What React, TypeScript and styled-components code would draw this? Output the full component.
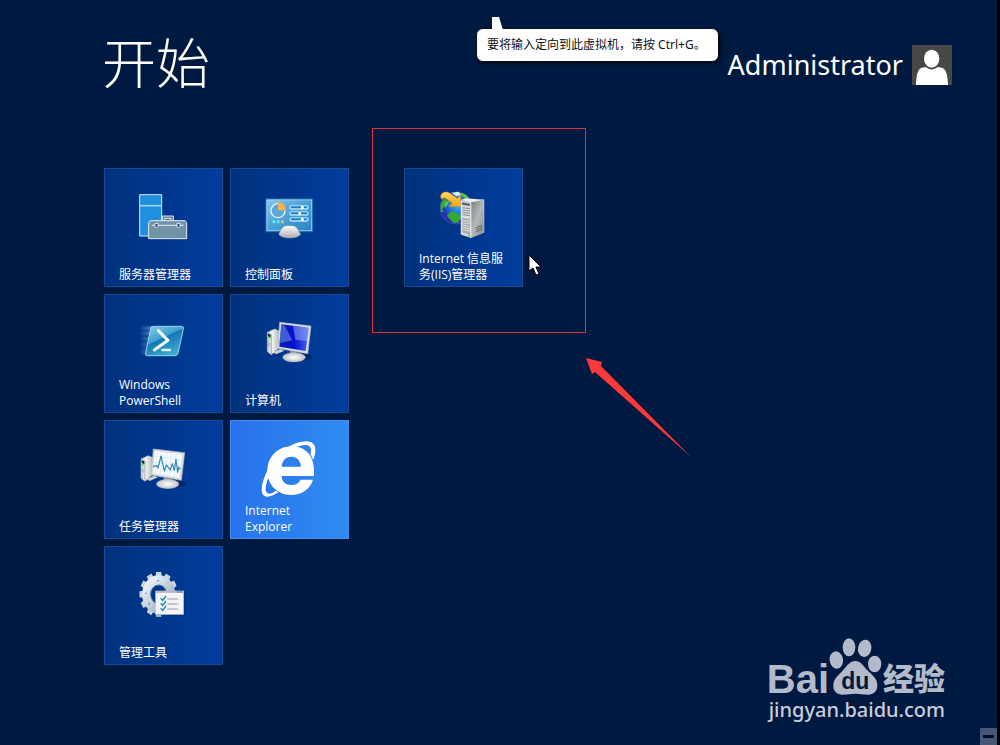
import React from "react";
import styled, { createGlobalStyle } from "styled-components";

const navy = "#001940";
const mark = "#b3bbca";
const uiFont = `"Open Sans", "Noto Sans CJK SC", sans-serif`;

const GlobalStyle = createGlobalStyle`
  body {
    margin: 0;
    background: ${navy};
    font-family: ${uiFont};
  }
`;

const Screen = styled.div`
  position: relative;
  box-sizing: border-box;
  min-height: 100vh;
  padding-bottom: 60px;
  background: ${navy};
  border-right: 3px solid #000;
  color: #fff;
  overflow: hidden;
`;

const Header = styled.header`
  display: flex;
  align-items: flex-end;
  justify-content: space-between;
  padding: 29px 45px 0 102px;
`;

const Title = styled.h1`
  margin: 0;
  font-family: "Noto Sans CJK SC", sans-serif;
  font-size: 54px;
  line-height: 64px;
  font-weight: 300;
`;

const Account = styled.button`
  display: flex;
  align-items: center;
  gap: 9px;
  margin-bottom: 8px;
  padding: 0;
  border: 0;
  background: none;
  color: #fff;
  font-family: "Noto Sans", sans-serif;
  font-size: 27px;
  line-height: 40px;
`;

const Avatar = styled.svg`
  display: block;
  width: 40px;
  height: 40px;
`;

const Callout = styled.div`
  position: absolute;
  top: 28px;
  left: 476px;
  box-sizing: border-box;
  padding: 8px 12px 8px 10px;
  border: 1px solid #0a0f1c;
  border-radius: 7px;
  background: #fff;
  box-shadow: 2px 2px 3px rgba(0, 0, 0, 0.6);
  color: #111;
  font-family: "Noto Sans", "Noto Sans CJK SC", sans-serif;
  font-size: 12px;
  line-height: 16px;
  white-space: nowrap;
`;

const CalloutTail = styled.svg`
  position: absolute;
  left: 14px;
  top: -14px;
  width: 14px;
  height: 15px;
`;

const Groups = styled.main`
  display: flex;
  align-items: flex-start;
  gap: 55px;
  padding: 75px 45px 0 104px;
`;

const Group = styled.section<{ $columns: number }>`
  position: relative;
  display: grid;
  grid-template-columns: repeat(${(p) => p.$columns}, 119px);
  grid-auto-rows: 119px;
  gap: 7px;
`;

const TileButton = styled.button<{ $bright?: boolean }>`
  display: flex;
  flex-direction: column;
  align-items: center;
  box-sizing: border-box;
  padding: 15px 0 3px;
  border: 1px solid ${(p) => (p.$bright ? "#438ff2" : "#184a92")};
  background: ${(p) =>
    p.$bright
      ? "linear-gradient(90deg, #2871ec, #2f8cf0)"
      : "linear-gradient(90deg, #00317d, #003d9d)"};
  color: #fff;
  font-family: inherit;
  font-size: 12px;
  line-height: 16px;
  text-align: left;
`;

const TileIcon = styled.svg`
  flex: none;
  width: 65px;
  height: 64px;
`;

const TileLabel = styled.span`
  align-self: stretch;
  margin-top: auto;
  padding: 0 12px 0 14px;
  white-space: pre-line;
`;

const Highlight = styled.div`
  position: absolute;
  inset: -40px -63px -46px -32px;
  border: 1px solid #d8343c;
  pointer-events: none;
`;

const Arrow = styled.svg`
  position: absolute;
  left: 180px;
  top: 188px;
  width: 110px;
  height: 104px;
  pointer-events: none;
`;

const Cursor = styled.svg`
  position: absolute;
  left: 124px;
  top: 86px;
  width: 14px;
  height: 23px;
  pointer-events: none;
`;

const Watermark = styled.div`
  position: absolute;
  right: 52px;
  bottom: 20px;
  color: ${mark};
`;

const WatermarkLogo = styled.div`
  display: flex;
  align-items: flex-end;
  justify-content: flex-end;
  height: 57px;
`;

const Brand = styled.span`
  font-family: "Liberation Sans", sans-serif;
  font-weight: 700;
  font-size: 40px;
  line-height: 32px;
`;

const Paw = styled.svg`
  width: 53px;
  height: 57px;
`;

const BrandSuffix = styled.span`
  margin-left: 1px;
  font-family: "Noto Sans CJK SC", sans-serif;
  font-weight: 900;
  font-size: 31px;
  line-height: 36px;
`;

const SiteAddress = styled.div`
  color: #c9ced9;
  font-family: "Noto Sans", sans-serif;
  font-size: 20px;
  font-weight: 500;
  line-height: 30px;
  text-align: right;
`;

const ZoomButton = styled.button`
  position: absolute;
  right: 0;
  bottom: 0;
  display: grid;
  place-items: center;
  width: 17px;
  height: 17px;
  padding: 0;
  border: 0;
  background: #465775;
`;

const ZoomBar = styled.span`
  width: 11px;
  height: 3px;
  background: #00102c;
`;

const ServerIcon = () => (
  <TileIcon viewBox="108 72 195 192" aria-hidden="true">
    <g stroke="#d5e8f8" strokeWidth="3">
      <path d="M134 104H200V228H134Z" fill="#208fe0" />
      <path d="M134 137H200" stroke="#9dd0f6" strokeWidth="5" />
    </g>
    <path d="M202 182V168H235V182M209 182V175H228V182" fill="#57788f" stroke="#dbe5ec" strokeWidth="3" />
    <path d="M166 182H270L275 188V236H161V188Z" fill="#7193a8" stroke="#e6edf2" strokeWidth="3" />
    <path d="M170 196H266" stroke="#e6edf2" strokeWidth="3" />
    <path d="M180 190H189V199L184 204L180 199ZM246 190H255V199L250 204L246 199Z" fill="#23496c" stroke="#fff" strokeWidth="2.5" />
  </TileIcon>
);

const ControlPanelIcon = () => (
  <TileIcon viewBox="486 72 195 192" aria-hidden="true">
    <defs>
      <linearGradient id="cpScreen" x1="0" y1="0" x2="1" y2="1">
        <stop offset="0" stopColor="#8cc8e8" />
        <stop offset=".5" stopColor="#4a9fd4" />
        <stop offset="1" stopColor="#2b80c2" />
      </linearGradient>
      <linearGradient id="cpBase" x1="0" y1="0" x2="0" y2="1">
        <stop offset="0" stopColor="#fff" />
        <stop offset="1" stopColor="#a9adb2" />
      </linearGradient>
    </defs>
    <rect x="513" y="117" width="140" height="98" fill="url(#cpScreen)" stroke="#2573b4" strokeWidth="3" />
    <rect x="516" y="120" width="134" height="92" fill="none" stroke="#a2daf1" strokeWidth="2" />
    <path d="M549 131A21 21 0 1 0 570 152" fill="#5aa8d8" stroke="#e6f4fc" strokeWidth="4" />
    <path d="M549 151V127A23 23 0 0 1 573 151Z" fill="#f8b14c" />
    {[143, 161, 179].map((y, i) => (
      <g key={y}>
        <rect x="583" y={y - 7} width="58" height="13" rx="6" fill="#b5e2f6" />
        <rect x="587" y={y - 4} width="50" height="6" rx="3" fill="#1a83c8" />
        <rect x={i === 1 ? 610 : 618} y={y - 5} width="8" height="9" fill="#fff" />
      </g>
    ))}
    <path d="M532 181H541V190H532ZM545 181H554V190H545Z" fill="#5ce3f2" />
    <path d="M558 181H567V190H558Z" fill="#f2b45c" />
    <path d="M551 222C558 211 561 197 576 197H591C606 197 609 211 617 222C611 238 558 238 551 222Z" fill="url(#cpBase)" stroke="#8d97a3" strokeWidth="1.5" />
  </TileIcon>
);

const PowerShellIcon = () => (
  <TileIcon viewBox="108 60 195 192" aria-hidden="true">
    <defs>
      <linearGradient id="psFace" x1="0" y1="0" x2=".6" y2="1">
        <stop offset="0" stopColor="#8bd0e8" />
        <stop offset=".48" stopColor="#3b9fce" />
        <stop offset=".5" stopColor="#1477b4" />
        <stop offset="1" stopColor="#3baad2" />
      </linearGradient>
      <linearGradient id="psTrail">
        <stop offset="0" stopColor="#6aaede" stopOpacity=".05" />
        <stop offset="1" stopColor="#86c5ea" stopOpacity=".6" />
      </linearGradient>
    </defs>
    <path d="M138 109H172V197H136Z" fill="url(#psTrail)" opacity=".45" />
    <path d="M138 109H172V119H138ZM134 124H168V136H134ZM140 141H165V151H140ZM133 156H163V170H133ZM136 176H158V192H136Z" fill="url(#psTrail)" opacity=".6" />
    <path d="M174 109H260Q267 109 265 117L249 190Q247 197 240 197H157Q150 197 152 190L167 115Q168 109 174 109Z" fill="url(#psFace)" stroke="#94d5e8" strokeWidth="3" />
    <path d="M190 122L219 151L178 180" fill="none" stroke="#f5fbff" strokeWidth="9" strokeLinecap="round" strokeLinejoin="round" />
    <path d="M202 180H225" stroke="#e0f3fc" strokeWidth="7" strokeLinecap="round" />
  </TileIcon>
);

const Workstation = ({ id, children }: { id: string; children: React.ReactNode }) => (
  <>
    <defs>
      <linearGradient id={id + "Case"}>
        <stop offset="0" stopColor="#bfc4c8" />
        <stop offset=".4" stopColor="#f4f5f5" />
        <stop offset="1" stopColor="#aeb4ba" />
      </linearGradient>
      <radialGradient id={id + "Foot"}>
        <stop offset="0" stopColor="#fff" />
        <stop offset="1" stopColor="#bfc2c6" />
      </radialGradient>
    </defs>
    <ellipse cx="616" cy="201" rx="36" ry="11" fill="#001b55" opacity=".6" />
    <path d="M535 187L556 177L568 182L543 193Z" fill="#cfd2d5" />
    <path d="M517 127L539 117L553 123L550 176L529 194L517 185Z" fill={`url(#${id}Case)`} stroke="#c3c9ce" strokeWidth="1.5" />
    <path d="M529 132V192" stroke="#8c9298" strokeWidth="2" />
    <path d="M519 130L527 134V143L519 139Z" fill="#202a34" />
    <path d="M519 140L527 143V147L519 144Z" fill="#5aed2f" />
    <path d="M519 158L526 162M519 163L526 167" stroke="#92999f" strokeWidth="2" />
    <path d="M586 182L608 188L603 203H584Z" fill="#999ea4" />
    <ellipse cx="597" cy="202" rx="34" ry="14" fill={`url(#${id}Foot)`} stroke="#aeb2b8" />
    <path d="M554 97L648 108L638 191L548 175Z" fill="#dcdcd8" stroke="#b9bec2" strokeWidth="2" />
    {children}
  </>
);

const ComputerIcon = () => (
  <TileIcon viewBox="486 60 195 192" aria-hidden="true">
    <defs>
      <linearGradient id="pcScreen">
        <stop offset="0" stopColor="#0b1fb0" />
        <stop offset=".5" stopColor="#0210cf" />
        <stop offset="1" stopColor="#4768ea" />
      </linearGradient>
    </defs>
    <Workstation id="pc">
      <path d="M559 103L641 113L632 183L553 170Z" fill="url(#pcScreen)" />
      <path d="M559 103L568 104L592 151L553 160Z" fill="#5479dc" opacity=".7" />
      <path d="M594 108L641 113L636 153L601 149Z" fill="#9fb5fa" opacity=".5" />
    </Workstation>
  </TileIcon>
);

const TaskManagerIcon = () => (
  <TileIcon viewBox="108 66 195 192" aria-hidden="true">
    <g transform="translate(-379 8)">
      <Workstation id="task">
        <path d="M559 103L641 113L632 183L553 170Z" fill="#f4fafd" />
        <path d="M566 105L560 171M580 107L574 174M594 109L588 176M608 111L602 178M622 112L616 180M558 120L640 130M556 137L638 147M554 154L636 163" stroke="#c8dde9" strokeWidth="1.5" />
        <path d="M553 150L564 147L568 154L577 118L587 163L593 145L599 152L605 160L611 141L617 161L622 128L627 167L630 151L635 158" fill="none" stroke="#3288b5" strokeWidth="3.5" strokeLinejoin="round" />
      </Workstation>
    </g>
  </TileIcon>
);

const ExplorerIcon = () => (
  <TileIcon viewBox="486 66 195 192" aria-hidden="true">
    <path
      fill="#fff"
      fillRule="evenodd"
      d="M657 186H560C560 204 573 213 590 213C602 213 612 207 617 197H654C645 226 620 243 588 243C546 243 517 212 517 172C517 130 547 97 590 97C636 97 662 132 657 186ZM560 158H618C617 140 606 128 589 128C572 128 561 140 560 158Z"
    />
    <path
      fill="#fff"
      d="M550 235C530 249 510 253 503 241C493 219 513 169 539 136C567 101 602 83 632 82C661 82 668 102 655 138L646 121C652 103 646 92 630 93C611 94 582 105 558 129C531 158 507 211 513 232C516 243 530 240 542 230Z"
    />
  </TileIcon>
);

const gearTeeth = Array.from({ length: 12 }, (_, i) => i * 30);

const ToolsIcon = () => (
  <TileIcon viewBox="108 69 195 192" aria-hidden="true">
    <defs>
      <linearGradient id="gear" x1="0" y1="0" x2="1" y2="1">
        <stop offset="0" stopColor="#f1f5f8" />
        <stop offset="1" stopColor="#93a9be" />
      </linearGradient>
    </defs>
    <g transform="translate(191 166) scale(.86 1)">
      <g fill="#c9d5e0">
        {gearTeeth.map((a) => (
          <path key={a} d="M-11 -50L-9 -67H9L11 -50Z" transform={`rotate(${a})`} />
        ))}
      </g>
      <circle r="43" fill="none" stroke="url(#gear)" strokeWidth="29" />
      <circle r="28" fill="#003681" stroke="#5d82b1" strokeWidth="3" />
    </g>
    <path d="M187 123H191V127H187ZM151 161H155V165H151ZM161 193H165V197H161Z" fill="#5878a0" />
    <rect x="185" y="159" width="83" height="70" fill="#001e55" opacity=".6" />
    <rect x="182" y="156" width="84" height="70" fill="#f4f4f6" stroke="#b9c0cb" strokeWidth="2" />
    <path d="M183 159H265" stroke="#9ca8b8" strokeWidth="4" />
    <path d="M247 159H251M255 159H260" stroke="#30465e" strokeWidth="3" />
    {[180, 195, 210].map((y) => (
      <g key={y} fill="none">
        <path d={`M197 ${y - 2}L203 ${y + 4}L213 ${y - 9}`} stroke="#188fc2" strokeWidth="4.5" />
        <path d={`M217 ${y}H250`} stroke="#a295ae" strokeWidth="3" />
      </g>
    ))}
  </TileIcon>
);

const IisIcon = () => (
  <TileIcon viewBox="198 192 195 192" aria-hidden="true">
    <defs>
      <radialGradient id="globe" cx=".55" cy=".4">
        <stop offset="0" stopColor="#43bdf7" />
        <stop offset=".55" stopColor="#1671de" />
        <stop offset="1" stopColor="#252bad" />
      </radialGradient>
      <linearGradient id="towerSide" x1="0" y1="0" x2="1" y2="1">
        <stop offset="0" stopColor="#777d7e" />
        <stop offset=".5" stopColor="#b5b8b7" />
        <stop offset="1" stopColor="#858987" />
      </linearGradient>
      <linearGradient id="hop" x1="0" y1="0" x2="0" y2="1">
        <stop offset="0" stopColor="#ffd861" />
        <stop offset="1" stopColor="#f5a315" />
      </linearGradient>
    </defs>
    <circle cx="273" cy="264" r="48" fill="url(#globe)" stroke="#4c57bd" strokeWidth="2" />
    <path d="M239 232L247 242L241 254L232 268L237 277L228 275L226 254ZM255 277L266 273L283 283L289 292L279 308L265 309L253 296L246 287Z" fill="#35a932" />
    <path d="M280 218Q303 217 314 237L304 239L291 229ZM240 246L253 241L249 254L238 264Z" fill="#55c54d" />
    <path d="M260 218L280 215L289 225L274 229Z" fill="#d8f5ed" />
    <path d="M227 232C226 216 245 212 257 221L278 236L286 223L288 259L251 260L262 250L244 236C237 231 234 232 232 239Z" fill="url(#hop)" stroke="#df8110" strokeWidth="1.5" />
    <path d="M317 245L357 239V337L318 353Z" fill="url(#towerSide)" stroke="#d5d8d8" strokeWidth="1.5" />
    <path d="M288 240L303 235L357 239L317 247Z" fill="#eef0ef" />
    <path d="M288 242L318 247V353L288 343Z" fill="#d9dcdc" stroke="#f0f1f1" strokeWidth="1.5" />
    <path d="M291 247L315 251V258L291 254Z" fill="#59616a" />
    <path d="M292 263L315 266M292 270L315 273M292 277L315 280M292 284L315 287" stroke="#878f97" strokeWidth="3" />
    <path d="M291 294L315 297V345L291 337Z" fill="#a7adaf" />
    <path d="M291 301L315 304M291 308L315 311M291 315L315 319M291 322L315 326M291 329L315 333" stroke="#e6e9e9" strokeWidth="2.5" />
    <path d="M309 344L316 346V351L309 349Z" fill="#65df28" />
    <path d="M333 323L351 316M333 329L351 322M333 335L351 328" stroke="#666e6b" strokeWidth="3" />
  </TileIcon>
);

type TileData = { label: string; Icon: () => React.ReactElement; bright?: boolean };

const mainTiles: TileData[] = [
  { label: "服务器管理器", Icon: ServerIcon },
  { label: "控制面板", Icon: ControlPanelIcon },
  { label: "Windows\nPowerShell", Icon: PowerShellIcon },
  { label: "计算机", Icon: ComputerIcon },
  { label: "任务管理器", Icon: TaskManagerIcon },
  { label: "Internet\nExplorer", Icon: ExplorerIcon, bright: true },
  { label: "管理工具", Icon: ToolsIcon },
];

const Tile = ({ label, Icon, bright }: TileData) => (
  <TileButton type="button" $bright={bright}>
    <Icon />
    <TileLabel>{label}</TileLabel>
  </TileButton>
);

export default function App() {
  return (
    <>
      <GlobalStyle />
      <Screen>
        <Header>
          <Title>开始</Title>
          <Account type="button">
            Administrator
            <Avatar viewBox="0 0 120 120" aria-hidden="true">
              <path d="M0 0H120V120H0Z" fill="#474747" />
              <path d="M12 120C13 91 17 72 29 68L42 66C51 76 67 76 77 66L90 68C103 72 107 91 108 120Z" fill="#fff" />
              <ellipse cx="59" cy="41" rx="23" ry="27" fill="#fff" />
            </Avatar>
          </Account>
        </Header>

        <Groups>
          <Group $columns={2}>
            {mainTiles.map((tile) => (
              <Tile key={tile.label} {...tile} />
            ))}
          </Group>
          <Group $columns={1}>
            <Tile label={"Internet 信息服\n务(IIS)管理器"} Icon={IisIcon} />
            <Highlight />
            <Arrow viewBox="0 0 110 104" aria-hidden="true">
              <path d="M2 2L18 6L17 10L107 101L11 16L8 18Z" fill="#fd3a38" />
            </Arrow>
            <Cursor viewBox="0 0 14 23" aria-hidden="true">
              <path d="M1 1V17L5 14L8 21L11 20L8 13H13Z" fill="#fff" stroke="#000" strokeWidth="1" />
            </Cursor>
          </Group>
        </Groups>

        <Callout role="tooltip">
          <CalloutTail viewBox="0 0 14 15" aria-hidden="true">
            <path d="M1 15V2H8L12 15Z" fill="#fff" />
          </CalloutTail>
          要将输入定向到此虚拟机，请按 Ctrl+G。
        </Callout>

        <Watermark>
          <WatermarkLogo>
            <Brand>Bai</Brand>
            <Paw viewBox="234 39 159 171" aria-hidden="true">
              <g fill={mark}>
                <ellipse cx="256" cy="105" rx="20" ry="26" transform="rotate(-8 256 105)" />
                <ellipse cx="294" cy="67" rx="19" ry="27" />
                <ellipse cx="341" cy="70" rx="20" ry="26" transform="rotate(10 341 70)" />
                <ellipse cx="371" cy="117" rx="20" ry="25" />
                <path d="M313 108C329 108 337 123 349 136C363 150 379 160 379 181C379 201 366 210 349 209C335 209 327 206 313 206C299 206 290 209 276 209C257 209 246 198 247 180C248 160 264 150 276 136C288 122 297 108 313 108Z" />
              </g>
              <text x="313" y="193" textAnchor="middle" fontFamily="Liberation Sans, sans-serif" fontWeight="700" fontSize="69" fill={navy}>
                du
              </text>
            </Paw>
            <BrandSuffix>经验</BrandSuffix>
          </WatermarkLogo>
          <SiteAddress>jingyan.baidu.com</SiteAddress>
        </Watermark>

        <ZoomButton type="button" aria-label="缩小">
          <ZoomBar />
        </ZoomButton>
      </Screen>
    </>
  );
}
